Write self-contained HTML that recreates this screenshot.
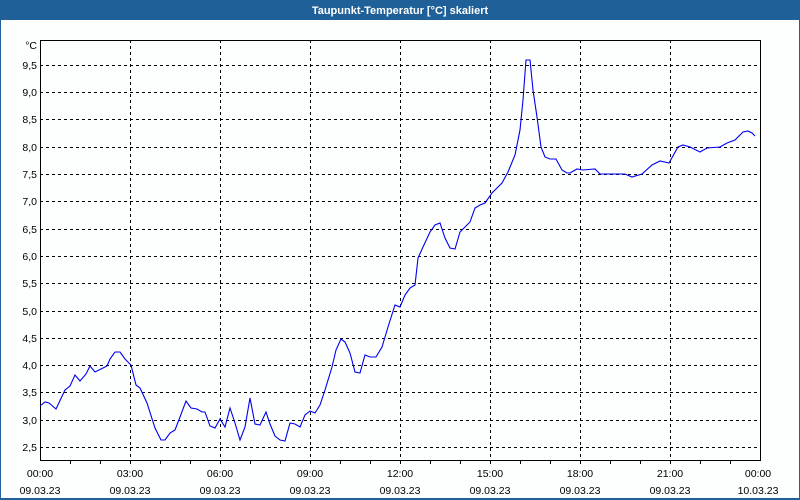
<!DOCTYPE html>
<html><head><meta charset="utf-8"><style>
html,body{margin:0;padding:0;background:#fff}
svg{display:block}
text{font-family:"Liberation Sans","DejaVu Sans",sans-serif;font-size:10.5px;fill:#000}
</style></head><body>
<svg width="800" height="500" viewBox="0 0 800 500" xmlns="http://www.w3.org/2000/svg">
<rect x="0" y="0" width="800" height="500" fill="#1f6098"/>
<rect x="1" y="20" width="798" height="478" fill="#fdfefe"/>
<text x="400" y="14" text-anchor="middle" style="fill:#fff;font-weight:bold;font-size:11px">Taupunkt-Temperatur [°C] skaliert</text>
<g stroke="#000" stroke-width="1" stroke-dasharray="3,3" shape-rendering="crispEdges">
<line x1="40" y1="65.5" x2="760" y2="65.5"/><line x1="40" y1="92.5" x2="760" y2="92.5"/>
<line x1="40" y1="119.5" x2="760" y2="119.5"/><line x1="40" y1="147.5" x2="760" y2="147.5"/>
<line x1="40" y1="174.5" x2="760" y2="174.5"/><line x1="40" y1="201.5" x2="760" y2="201.5"/>
<line x1="40" y1="229.5" x2="760" y2="229.5"/><line x1="40" y1="256.5" x2="760" y2="256.5"/>
<line x1="40" y1="283.5" x2="760" y2="283.5"/><line x1="40" y1="311.5" x2="760" y2="311.5"/>
<line x1="40" y1="338.5" x2="760" y2="338.5"/><line x1="40" y1="365.5" x2="760" y2="365.5"/>
<line x1="40" y1="392.5" x2="760" y2="392.5"/><line x1="40" y1="420.5" x2="760" y2="420.5"/>
<line x1="40" y1="447.5" x2="760" y2="447.5"/>
<line x1="130.5" y1="40" x2="130.5" y2="460"/><line x1="220.5" y1="40" x2="220.5" y2="460"/>
<line x1="310.5" y1="40" x2="310.5" y2="460"/><line x1="400.5" y1="40" x2="400.5" y2="460"/>
<line x1="490.5" y1="40" x2="490.5" y2="460"/><line x1="580.5" y1="40" x2="580.5" y2="460"/>
<line x1="670.5" y1="40" x2="670.5" y2="460"/>
</g>
<rect x="40.5" y="40.5" width="720" height="420" fill="none" stroke="#000" stroke-width="1" shape-rendering="crispEdges"/>
<g stroke="#000" stroke-width="1" shape-rendering="crispEdges">
<line x1="70.5" y1="461" x2="70.5" y2="464"/><line x1="100.5" y1="461" x2="100.5" y2="464"/><line x1="130.5" y1="461" x2="130.5" y2="464"/>
<line x1="160.5" y1="461" x2="160.5" y2="464"/><line x1="190.5" y1="461" x2="190.5" y2="464"/><line x1="220.5" y1="461" x2="220.5" y2="464"/>
<line x1="250.5" y1="461" x2="250.5" y2="464"/><line x1="280.5" y1="461" x2="280.5" y2="464"/><line x1="310.5" y1="461" x2="310.5" y2="464"/>
<line x1="340.5" y1="461" x2="340.5" y2="464"/><line x1="370.5" y1="461" x2="370.5" y2="464"/><line x1="400.5" y1="461" x2="400.5" y2="464"/>
<line x1="430.5" y1="461" x2="430.5" y2="464"/><line x1="460.5" y1="461" x2="460.5" y2="464"/><line x1="490.5" y1="461" x2="490.5" y2="464"/>
<line x1="520.5" y1="461" x2="520.5" y2="464"/><line x1="550.5" y1="461" x2="550.5" y2="464"/><line x1="580.5" y1="461" x2="580.5" y2="464"/>
<line x1="610.5" y1="461" x2="610.5" y2="464"/><line x1="640.5" y1="461" x2="640.5" y2="464"/><line x1="670.5" y1="461" x2="670.5" y2="464"/>
<line x1="700.5" y1="461" x2="700.5" y2="464"/><line x1="730.5" y1="461" x2="730.5" y2="464"/>
</g>
<g text-anchor="end">
<text x="37" y="49">°C</text>
<text x="37" y="69">9,5</text><text x="37" y="96">9,0</text><text x="37" y="123">8,5</text>
<text x="37" y="151">8,0</text><text x="37" y="178">7,5</text><text x="37" y="205">7,0</text>
<text x="37" y="233">6,5</text><text x="37" y="260">6,0</text><text x="37" y="287">5,5</text>
<text x="37" y="315">5,0</text><text x="37" y="342">4,5</text><text x="37" y="369">4,0</text>
<text x="37" y="396">3,5</text><text x="37" y="424">3,0</text><text x="37" y="451">2,5</text>
</g>
<g text-anchor="middle">
<text x="40" y="477">00:00</text><text x="40" y="494">09.03.23</text>
<text x="130" y="477">03:00</text><text x="130" y="494">09.03.23</text>
<text x="220" y="477">06:00</text><text x="220" y="494">09.03.23</text>
<text x="310" y="477">09:00</text><text x="310" y="494">09.03.23</text>
<text x="400" y="477">12:00</text><text x="400" y="494">09.03.23</text>
<text x="490" y="477">15:00</text><text x="490" y="494">09.03.23</text>
<text x="580" y="477">18:00</text><text x="580" y="494">09.03.23</text>
<text x="670" y="477">21:00</text><text x="670" y="494">09.03.23</text>
<text x="758" y="477">00:00</text><text x="758" y="494">10.03.23</text>
</g>
<polyline fill="none" stroke="#0000ee" stroke-width="1.1" points="40,406 45,402 49,403 56,409 65,390 70,386 75,375 80,381 86,374 90,366 95,372 103,368 107,366 110,359 115,352 120,352 125,359 131,365 136,385 140,388 147,403 155,428 161,440 165,440 170,433 175,430 180,417 186,401 191,408 197,409 202,412 205,412 210,426 215,428 220,419 225,427 230,408 235,423 240,440 245,427 250,398 255,424 260,425 266,412 270,424 275,436 280,440 285,441 290,423 295,424 300,427 305,415 310,411 315,413 320,405 325,390 332,367 336,350 341,339 345,342 350,353 355,372 360,373 365,355 370,357 376,357 382,347 388,327 395,305 400,307 405,295 410,288 415,285 418,258 423,247 430,232 435,225 440,223 445,238 450,248 455,249 460,232 465,227 470,222 475,208 480,205 485,203 492,193 502,183 508,172 515,155 520,130 523,100 526,60 530,60 533,90 537,117 541,147 545,157 550,159 556,159 562,170 567,173 570,173 577,169 583,170 595,169 600,174 625,174 632,177 642,174 652,165 660,161 669,163 678,147 683,145 690,147 700,152 707,148 720,147 727,143 735,140 743,132 748,131 752,133 755,136"/>
</svg>
</body></html>
